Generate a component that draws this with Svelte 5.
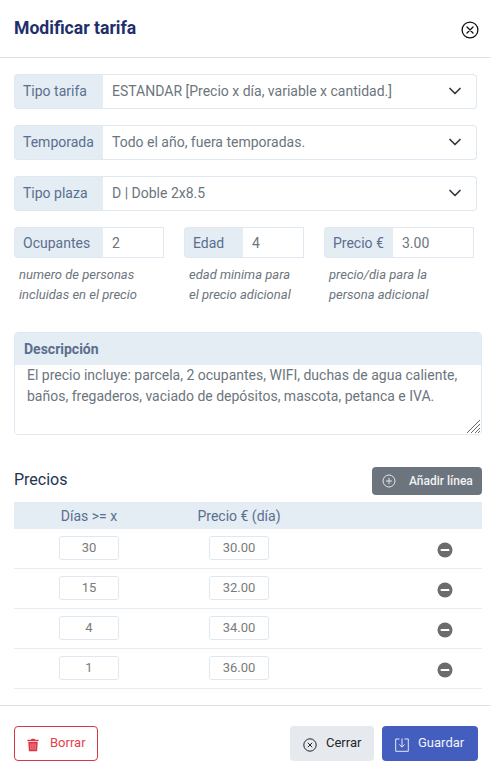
<script>
	let selects = [
		{ label: 'Tipo tarifa', value: 'ESTANDAR [Precio x día, variable x cantidad.]' },
		{ label: 'Temporada', value: 'Todo el año, fuera temporadas.' },
		{ label: 'Tipo plaza', value: 'D | Doble 2x8.5' }
	];

	let params = [
		{ label: 'Ocupantes', value: '2', addon: 89, width: 150, hint: ['numero de personas', 'incluidas en el precio'] },
		{ label: 'Edad', value: '4', addon: 59, width: 120, hint: ['edad minima para', 'el precio adicional'] },
		{ label: 'Precio €', value: '3.00', addon: 69, width: 150, hint: ['precio/dia para la', 'persona adicional'] }
	];

	let descripcion = $state(
		'El precio incluye: parcela, 2 ocupantes, WIFI, duchas de agua caliente, baños, fregaderos, vaciado de depósitos, mascota, petanca e IVA.'
	);

	let precios = $state([
		{ dias: '30', precio: '30.00' },
		{ dias: '15', precio: '32.00' },
		{ dias: '4', precio: '34.00' },
		{ dias: '1', precio: '36.00' }
	]);
</script>

<div class="modal">
	<header class="head">
		<h1>Modificar tarifa</h1>
		<button class="close" aria-label="Cerrar">
			<svg viewBox="0 0 18 18" width="18" height="18" fill="none" stroke="#111" stroke-width="1.3">
				<circle cx="9" cy="9" r="7.9" />
				<path d="M6 6l6 6M12 6l-6 6" stroke-linecap="round" />
			</svg>
		</button>
	</header>

	<section class="body">
		{#each selects as s}
			<div class="group select-group">
				<span class="addon">{s.label}</span>
				<div class="select">
					<span>{s.value}</span>
					<svg viewBox="0 0 12 8" width="12" height="8" fill="none" stroke="#343a40" stroke-width="1.7">
						<path d="M1 1.5l5 5 5-5" stroke-linecap="round" stroke-linejoin="round" />
					</svg>
				</div>
			</div>
		{/each}

		<div class="params">
			{#each params as p}
				<div class="param" style="width: {p.width}px">
					<div class="group small">
						<span class="addon" style="width: {p.addon}px">{p.label}</span>
						<input class="field" value={p.value} />
					</div>
					<p class="hint">{p.hint[0]}<br />{p.hint[1]}</p>
				</div>
			{/each}
		</div>

		<div class="desc">
			<div class="desc-title">Descripción</div>
			<textarea bind:value={descripcion} rows="3"></textarea>
			<svg class="grip" viewBox="0 0 14 14" width="14" height="14" stroke="#666" stroke-width="1">
				<path d="M14 1L1 14M14 5L5 14M14 9L9 14M14 12L12 14" />
			</svg>
		</div>

		<div class="prices-head">
			<h2>Precios</h2>
			<button class="add">
				<svg viewBox="0 0 14 14" width="14" height="14" fill="none" stroke="#e3e5e8" stroke-width="1">
					<circle cx="7" cy="7" r="6" />
					<path d="M7 4v6M4 7h6" />
				</svg>
				Añadir línea
			</button>
		</div>

		<div class="table">
			<div class="row th">
				<span class="c1">Días &gt;= x</span>
				<span class="c2">Precio € (día)</span>
			</div>
			{#each precios as p}
				<div class="row">
					<span class="c1"><input class="cell" bind:value={p.dias} /></span>
					<span class="c2"><input class="cell" bind:value={p.precio} /></span>
					<span class="c3">
						<svg viewBox="0 0 16 16" width="16" height="16">
							<circle cx="8" cy="8" r="7.5" fill="#6c6c6c" />
							<rect x="3.5" y="6.9" width="9" height="2.2" rx="1" fill="#fff" />
						</svg>
					</span>
				</div>
			{/each}
		</div>
	</section>

	<footer class="foot">
		<button class="btn danger">
			<svg viewBox="0 0 12 14" width="12" height="14">
				<path d="M0.5 1.8h3.4l.6-1.1h3l.6 1.1h3.4v1.4h-11z" fill="#dc3545" />
				<path d="M1.3 4h9.4l-.6 9.3H1.9z" fill="#dc3545" />
				<path d="M3.9 5.4v6.4M6 5.4v6.4M8.1 5.4v6.4" stroke="#f3a6ad" stroke-width="0.8" />
			</svg>
			Borrar
		</button>
		<div class="foot-right">
			<button class="btn light">
				<svg viewBox="0 0 14 14" width="14" height="14" fill="none" stroke="#212529" stroke-width="1">
					<circle cx="7" cy="7" r="6.2" />
					<path d="M4.8 4.8l4.4 4.4M9.2 4.8l-4.4 4.4" />
				</svg>
				Cerrar
			</button>
			<button class="btn primary">
				<svg viewBox="0 0 14 14" width="14" height="14" fill="none" stroke="#e6e9f6" stroke-width="1">
					<path d="M4.5 1H.7v12.3h12.6V1H9.5" />
					<path d="M7 .5v8.5M4.3 6.4L7 9.2l2.7-2.8" />
				</svg>
				Guardar
			</button>
		</div>
	</footer>
</div>

<style>
	:global(body) {
		margin: 0;
		background: #fff;
	}

	.modal {
		width: 491px;
		height: 776px;
		display: flex;
		flex-direction: column;
		font-family: Roboto, sans-serif;
		font-size: 14px;
		color: #5a6b85;
		box-sizing: border-box;
	}

	.head {
		height: 58px;
		box-sizing: border-box;
		border-bottom: 1px solid #e2e2e2;
		padding: 17px 12px 0 14px;
		display: flex;
		justify-content: space-between;
		align-items: flex-start;
	}

	h1 {
		margin: 0;
		font-size: 17.6px;
		line-height: 22px;
		font-weight: 700;
		color: #1f2f6b;
	}

	.close {
		border: none;
		background: none;
		padding: 0;
		margin-top: 4px;
		width: 18px;
		height: 18px;
	}

	.body {
		flex: 1;
		padding: 16px 9px 0 14px;
	}

	.group {
		display: flex;
		box-sizing: border-box;
	}

	.select-group {
		width: 463px;
		height: 35px;
		margin-bottom: 16px;
	}

	.select-group .addon,
	.select {
		padding-bottom: 1px;
	}

	.addon {
		width: 89px;
		flex: none;
		box-sizing: border-box;
		background: #e4ecf4;
		border: 1px solid #e0e8f1;
		border-right: none;
		border-radius: 4px 0 0 4px;
		padding-left: 8px;
		display: flex;
		align-items: center;
		font-size: 14px;
		color: #5a6f8e;
	}

	.select {
		flex: 1;
		box-sizing: border-box;
		border: 1px solid #dfe7f0;
		border-left: none;
		border-radius: 0 4px 4px 0;
		padding-left: 9px;
		padding-right: 15px;
		display: flex;
		align-items: center;
		justify-content: space-between;
		font-size: 14px;
		color: #6c757d;
	}

	.params {
		display: flex;
		gap: 20px;
	}

	.small {
		height: 31px;
	}

	.field {
		flex: 1;
		min-width: 0;
		box-sizing: border-box;
		border: 1px solid #dfe7f0;
		border-left: none;
		border-radius: 0;
		padding: 0 0 0 9px;
		font: inherit;
		font-size: 14px;
		color: #6c757d;
		outline: none;
	}

	.hint {
		margin: 7px 0 0 5px;
		font-size: 13px;
		line-height: 20px;
		font-style: italic;
		color: #6c757d;
	}

	.desc {
		position: relative;
		margin-top: 27px;
		width: 468px;
		height: 103px;
		box-sizing: border-box;
		border: 1px solid #dfe7f0;
		border-radius: 4px;
		display: flex;
		flex-direction: column;
		overflow: hidden;
	}

	.desc-title {
		height: 32px;
		flex: none;
		background: #e4ecf4;
		padding-left: 9px;
		display: flex;
		align-items: center;
		font-size: 14px;
		font-weight: 700;
		color: #5a6f8e;
	}

	textarea {
		flex: 1;
		border: none;
		outline: none;
		padding: 0 12px;
		font: inherit;
		font-size: 14px;
		line-height: 21px;
		color: #6c757d;
		display: block;
		margin: 0;
		resize: none;
	}

	.grip {
		position: absolute;
		right: 1px;
		bottom: 1px;
	}

	.prices-head {
		width: 468px;
		margin-top: 32px;
		height: 28px;
		display: flex;
		justify-content: space-between;
		align-items: center;
	}

	h2 {
		margin: 0;
		font-size: 16px;
		font-weight: 400;
		color: #24344f;
		position: relative;
		top: -2px;
	}

	.add {
		width: 110px;
		height: 28px;
		border: none;
		border-radius: 4px;
		background: #6c757d;
		color: #f1f2f3;
		font: inherit;
		font-size: 12px;
		font-weight: 500;
		display: flex;
		align-items: center;
		gap: 13px;
		padding: 0 0 0 10px;
	}

	.table {
		width: 468px;
		margin-top: 7px;
	}

	.row {
		height: 40px;
		box-sizing: border-box;
		border-bottom: 1px solid #e4ecf4;
		display: flex;
		align-items: center;
		padding-bottom: 2px;
	}

	.th {
		height: 27px;
		padding-bottom: 0;
		background: #e4ecf4;
		border: none;
		font-size: 14px;
		color: #5a6f8e;
	}

	.c1 {
		width: 150px;
		text-align: center;
	}

	.c2 {
		width: 150px;
		text-align: center;
	}

	.c3 {
		flex: 1;
		display: flex;
		justify-content: flex-end;
		padding-right: 29px;
		padding-top: 4px;
	}

	.cell {
		width: 60px;
		height: 24px;
		box-sizing: border-box;
		border: 1px solid #dfe7f0;
		border-radius: 3px;
		padding: 0;
		text-align: center;
		font: inherit;
		font-size: 13px;
		color: #7a7a7a;
		outline: none;
		display: block;
		margin: 0 auto;
	}

	.foot {
		height: 71px;
		box-sizing: border-box;
		border-top: 1px solid #e2e2e2;
		padding: 20px 13px 0 14px;
		display: flex;
		justify-content: space-between;
		align-items: flex-start;
	}

	.foot-right {
		display: flex;
		gap: 8px;
	}

	.btn {
		height: 35px;
		box-sizing: border-box;
		border-radius: 4px;
		font: inherit;
		font-size: 13px;
		font-weight: 400;
		display: flex;
		align-items: center;
		border: none;
		padding: 0 0 2px;
	}

	.btn svg {
		position: relative;
		top: 2px;
	}

	.danger {
		width: 84px;
		background: #fff;
		border: 1px solid #dc3545;
		color: #e5424f;
		gap: 11px;
		padding-left: 12px;
	}

	.light {
		width: 84px;
		background: #e6e9ee;
		color: #212529;
		gap: 9px;
		padding-left: 13px;
	}

	.primary {
		width: 96px;
		background: #435ebe;
		color: #f2f4fb;
		gap: 9px;
		padding-left: 13px;
	}
</style>
